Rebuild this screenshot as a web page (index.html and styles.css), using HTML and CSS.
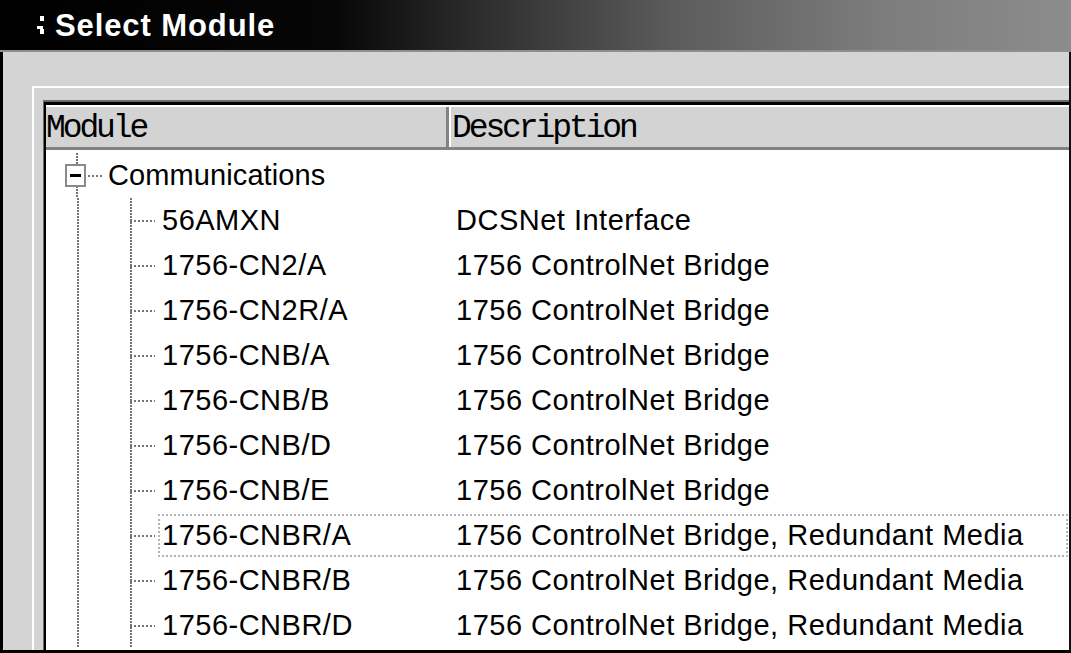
FILE: index.html
```html
<!DOCTYPE html>
<html lang="en">
<head>
<meta charset="utf-8">
<title>Select Module</title>
<link rel="stylesheet" href="styles.css">
</head>
<body>
<div class="window">
  <div class="titlebar">
    <svg class="ticon" width="7" height="19" viewBox="0 0 7 19">
      <rect x="3" y="0" width="4" height="5" fill="#fff"/>
      <rect x="0" y="10" width="6" height="3" fill="#fff"/>
      <rect x="3" y="13" width="4" height="5" fill="#fff"/>
    </svg>
    <span class="title">Select Module</span>
  </div>
  <div class="dialog">
    <div class="panel">
      <div class="listview">
        <div class="lv-inner">
          <div class="header">
            <div class="hcell hmod"><span class="htext">Module</span></div>
            <div class="hcell hdesc"><span class="htext">Description</span></div>
          </div>
          <div class="rows">
            <div class="row">
              <div class="expander"><span class="box"><span class="minus"></span></span></div>
              <div class="hline"></div>
              <div class="rootlabel">Communications</div>
            </div>
            <div class="row"><div class="vroot"></div><div class="elbow"></div><div class="content"><span class="label">56AMXN</span><span class="desc">DCSNet Interface</span></div></div>
            <div class="row"><div class="vroot"></div><div class="elbow"></div><div class="content"><span class="label">1756-CN2/A</span><span class="desc">1756 ControlNet Bridge</span></div></div>
            <div class="row"><div class="vroot"></div><div class="elbow"></div><div class="content"><span class="label">1756-CN2R/A</span><span class="desc">1756 ControlNet Bridge</span></div></div>
            <div class="row"><div class="vroot"></div><div class="elbow"></div><div class="content"><span class="label">1756-CNB/A</span><span class="desc">1756 ControlNet Bridge</span></div></div>
            <div class="row"><div class="vroot"></div><div class="elbow"></div><div class="content"><span class="label">1756-CNB/B</span><span class="desc">1756 ControlNet Bridge</span></div></div>
            <div class="row"><div class="vroot"></div><div class="elbow"></div><div class="content"><span class="label">1756-CNB/D</span><span class="desc">1756 ControlNet Bridge</span></div></div>
            <div class="row"><div class="vroot"></div><div class="elbow"></div><div class="content"><span class="label">1756-CNB/E</span><span class="desc">1756 ControlNet Bridge</span></div></div>
            <div class="row"><div class="vroot"></div><div class="elbow"></div><div class="content focus"><span class="label">1756-CNBR/A</span><span class="desc">1756 ControlNet Bridge, Redundant Media</span></div></div>
            <div class="row"><div class="vroot"></div><div class="elbow"></div><div class="content"><span class="label">1756-CNBR/B</span><span class="desc">1756 ControlNet Bridge, Redundant Media</span></div></div>
            <div class="row"><div class="vroot"></div><div class="elbow"></div><div class="content"><span class="label">1756-CNBR/D</span><span class="desc">1756 ControlNet Bridge, Redundant Media</span></div></div>
          </div>
        </div>
      </div>
    </div>
  </div>
</div>
</body>
</html>
```
FILE: styles.css
```css
* { box-sizing: border-box; }
html, body { margin: 0; padding: 0; }
body {
  width: 1071px;
  height: 653px;
  overflow: hidden;
  background: #d4d4d4;
  font-family: "Liberation Sans", Arial, sans-serif;
}
.window {
  width: 1071px;
  height: 653px;
  display: flex;
  flex-direction: column;
}
.titlebar {
  height: 52px;
  flex: none;
  display: flex;
  align-items: center;
  padding-left: 37px;
  border-bottom: 2px solid #8e8e8e;
  background: linear-gradient(to right, #000 0%, #060606 31%, #2e2e2e 45%, #5c5c5c 63%, #7c7c7c 82%, #8c8c8c 100%);
}
.ticon { margin-right: 11px; flex: none; }
.title {
  color: #fff;
  font-weight: bold;
  font-size: 31px;
  letter-spacing: 0.9px;
  line-height: 1;
}
.dialog {
  flex: 1;
  min-height: 0;
  overflow: hidden;
  border-left: 3px solid #000;
  border-right: 2px solid #111;
  border-bottom: 3px solid #000;
  padding: 34px 0 0 29px;
  display: flex;
  flex-direction: column;
}
.panel {
  flex: 1;
  min-height: 0;
  border-top: 2px solid #fff;
  border-left: 2px solid #fff;
  padding: 12px 0 0 9px;
  display: flex;
  flex-direction: column;
}
.listview {
  flex: 1;
  min-height: 0;
  border-top: 2px solid #6a6a6a;
  border-left: 1px solid #6a6a6a;
  background: #fff;
  display: flex;
  flex-direction: column;
}
.lv-inner {
  flex: 1;
  min-height: 0;
  border-top: 3px solid #000;
  border-left: 2px solid #000;
  display: flex;
  flex-direction: column;
}
.header {
  height: 45px;
  flex: none;
  display: flex;
  border-top: 2px solid #fff;
  border-bottom: 3px solid #828282;
  background: #d3d3d3;
  font-family: "Liberation Mono", "Courier New", monospace;
  font-size: 33px;
  letter-spacing: -3.1px;
  color: #000;
}
.hcell {
  display: flex;
  align-items: center;
}
.htext { padding-top: 2px; }
.hmod {
  width: 403px;
  border-right: 3px solid #828282;
}
.hdesc {
  flex: 1;
  border-left: 2px solid #fff;
  padding-left: 1px;
}
.rows {
  padding-top: 3px;
  font-size: 29px;
  letter-spacing: 0.5px;
  color: #000;
}
.row {
  height: 45px;
  display: flex;
  align-items: stretch;
}
.expander {
  margin-left: 19px;
  width: 23px;
  position: relative;
  display: flex;
  align-items: center;
}
.expander::before {
  content: "";
  position: absolute;
  left: 11px;
  top: 0;
  bottom: 0;
  width: 2px;
  background: repeating-linear-gradient(to bottom, #747474 0 2px, transparent 2px 3px);
}
.box {
  position: relative;
  width: 21px;
  height: 23px;
  border: 2px solid #8a8a8a;
  background: #fff;
  display: flex;
  align-items: center;
  justify-content: center;
}
.minus {
  width: 11px;
  height: 3px;
  background: #000;
}
.hline {
  width: 15px;
  align-self: center;
  height: 2px;
  margin-right: 5px;
  background: repeating-linear-gradient(to right, #747474 0 2px, transparent 2px 4px);
}
.rootlabel {
  display: flex;
  align-items: center;
  letter-spacing: 0.1px;
}
.vroot {
  margin-left: 31px;
  width: 53px;
  background: repeating-linear-gradient(to bottom, #747474 0 2px, transparent 2px 3px) no-repeat 0 0 / 2px 100%;
}
.elbow {
  width: 28px;
  background:
    repeating-linear-gradient(to bottom, #747474 0 2px, transparent 2px 3px) no-repeat 0 0 / 2px 100%,
    repeating-linear-gradient(to right, #747474 0 2px, transparent 2px 4px) no-repeat 0 50% / 25px 2px;
}
.content {
  flex: 1;
  display: flex;
  align-items: center;
  margin: 1px 1px 1px 0;
  border: 2px dotted transparent;
  padding-left: 2px;
}
.content.focus {
  border-color: #b4b4b4;
}
.label {
  width: 294px;
  flex: none;
  white-space: nowrap;
}
.desc {
  white-space: nowrap;
}
```
